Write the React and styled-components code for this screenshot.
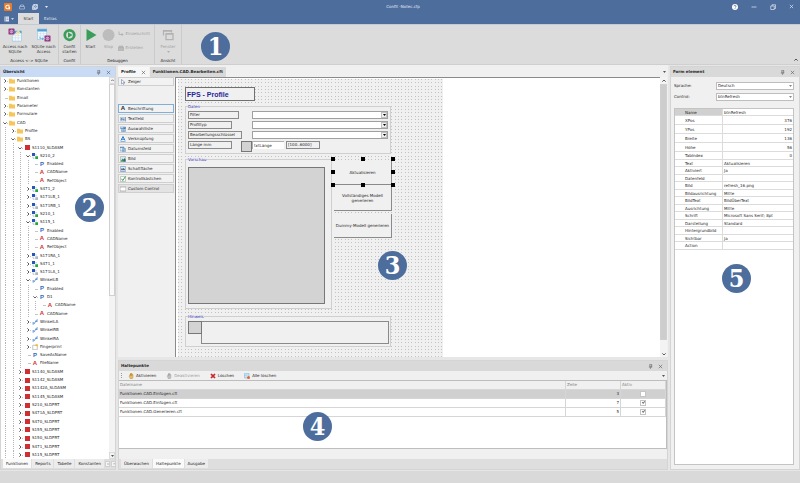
import React from 'react';
import styled, { createGlobalStyle, css } from 'styled-components';

const blue = '#4d6d9c';
const shade = '#dcdcdc';
const face = '#f0f0f0';

const GlobalStyle = createGlobalStyle`
  *, *::before, *::after { box-sizing: border-box; }
  body { margin: 0; background: ${shade}; }
  body, button, input, select, table {
    font-family: 'DejaVu Sans', Tahoma, sans-serif;
    font-size: 4px;
    line-height: 6px;
    color: #262626;
  }
  button { border: 0; padding: 0; background: none; white-space: nowrap; }
  svg { display: block; flex: none; }
`;

/* ---------- shell ---------- */
const Shell = styled.div`
  position: relative;
  height: 100vh;
  display: grid;
  grid-template-rows: 24px 41px minmax(0, 1fr) 12px;
`;
const Banner = styled.header`
  background: ${blue};
  color: #e8eef8;
  display: flex;
  flex-direction: column;
  justify-content: space-between;
`;
const TitleBar = styled.div`
  display: grid;
  grid-template-columns: 1fr auto 1fr;
  align-items: center;
  height: 13px;
  padding: 0 6px 0 12px;
`;
const Title = styled.h1`
  margin: 0;
  font-size: 4px;
  font-weight: normal;
`;
const QuickBar = styled.div`
  display: flex;
  align-items: center;
  gap: 13px;
`;
const QuickIcons = styled(QuickBar)`
  gap: 7px;
  margin-left: -8px;
`;
const WindowButtons = styled(QuickBar)`
  justify-content: flex-end;
`;
const MenuTabs = styled.nav`
  display: flex;
  height: 11px;
  align-items: stretch;
`;
const MenuTab = styled.button`
  min-width: 21px;
  padding: 0 5px;
  color: ${p => (p.$active ? '#303030' : '#e8eef8')};
  background: ${p => (p.$active ? shade : 'transparent')};
`;
const FileMenu = styled.button`
  width: 18px;
  display: flex;
  align-items: center;
  justify-content: center;
  gap: 1px;
`;

/* ---------- ribbon ---------- */
const Ribbon = styled.div`
  display: flex;
  background: ${shade};
  position: relative;
  border-top: 1px solid #c4cad4;
  border-bottom: 1px solid #cfcfcf;
`;
const RibbonGroup = styled.section`
  width: ${p => p.$width}px;
  border-right: 1px solid #cbcbcb;
  display: flex;
  flex-direction: column;
  align-items: center;
  justify-content: space-between;
`;
const RibbonTools = styled.div`
  display: flex;
  padding-top: 3px;
`;
const BigButton = styled.button`
  width: ${p => p.$width}px;
  height: 28px;
  display: flex;
  flex-direction: column;
  align-items: center;
  justify-content: flex-start;
  gap: 2px;
  line-height: 5px;
  white-space: pre-line;
  color: ${p => (p.disabled ? '#a0a0a0' : '#303030')};
`;
const SmallButtons = styled.div`
  display: flex;
  flex-direction: column;
  gap: 8px;
  padding-top: 3px;
  width: 36px;
`;
const SmallButton = styled.button`
  display: flex;
  align-items: center;
  gap: 2px;
  color: #a0a0a0;
`;
const GroupName = styled.span`
  padding-bottom: 0;
`;
const Collapse = styled.button`
  margin-left: auto;
  align-self: flex-end;
  padding: 2px;
`;

/* ---------- docking ---------- */
const Workspace = styled.main`
  display: grid;
  grid-template-columns: 116px minmax(0, 1fr) 130px;
  gap: 2px;
  background: #e6e6e6;
`;
const Dock = styled.section`
  position: relative;
  display: flex;
  flex-direction: column;
  min-height: 0;
  min-width: 0;
  background: ${face};
  border: 1px solid #d4d4d4;
  margin: 1px 0;
`;
const DockHeader = styled.header`
  display: flex;
  align-items: center;
  gap: 5px;
  height: 10px;
  flex: none;
  padding: 0 4px 0 2px;
  background: ${p => (p.$active ? '#c9daf5' : '#d9d9d9')};
`;
const DockTitle = styled.h2`
  margin: 0;
  flex: 1;
  font-size: 4px;
  font-weight: bold;
`;
const Center = styled.div`
  display: grid;
  grid-template-rows: minmax(0, 1fr) 112px;
  gap: 2px;
  min-width: 0;
`;

/* ---------- tree ---------- */
const TreeFrame = styled.div`
  flex: 1;
  min-height: 0;
  display: flex;
  background: #fff;
`;
const TreeList = styled.ul`
  list-style: none;
  margin: 0;
  padding: 0;
  flex: 1;
  min-width: 0;
  overflow: hidden;
  display: grid;
  grid-template-rows: repeat(46, minmax(8px, 1fr));
`;
const TreeRow = styled.li`
  display: flex;
  align-items: center;
  white-space: nowrap;
`;
const Guide = styled.span`
  align-self: stretch;
  width: 8px;
  flex: none;
  background: repeating-linear-gradient(#b4b4b4 0 1px, transparent 1px 2px) 4px 0 / 1px 100% no-repeat;
  &:nth-child(even) { width: 7px; }
`;
const Twist = styled.span`
  width: 8px;
  height: 6px;
  flex: none;
  display: flex;
  align-items: center;
  padding-left: 2px;
  background: linear-gradient(#c4c4c4, #c4c4c4) ${p => (p.$leaf ? 4 : 6)}px 3px / ${p => (p.$leaf ? 3 : 1)}px 1px no-repeat;
`;
const TreeIcon = styled.span`
  width: 6px;
  margin-right: 2px;
  flex: none;
  display: flex;
  justify-content: center;
`;
const ScrollBar = styled.div`
  width: ${p => p.$width}px;
  flex: none;
  display: flex;
  flex-direction: column;
  background: #f3f3f3;
`;
const ScrollButton = styled.button`
  height: 7px;
  display: flex;
  align-items: center;
  justify-content: center;
  border: 1px solid ${p => (p.$flat ? 'transparent' : '#dadada')};
`;
const Thumb = styled.div`
  flex: ${p => p.$share};
  background: ${p => p.$color};
  border: 1px solid #d0d0d0;
`;
const ThumbRest = styled.div`
  flex: ${p => p.$share};
`;
const FootTabs = styled.nav`
  display: flex;
  align-items: stretch;
  gap: 1px;
  height: ${p => p.$height}px;
  flex: none;
  padding: 0 2px 1px;
  background: #dedede;
`;
const FootTab = styled.button`
  padding: 0 3px;
  background: ${p => (p.$active ? '#fafafa' : '#ececec')};
`;
const FootArrows = styled.div`
  display: flex;
  align-items: center;
  gap: 1px;
  margin-left: auto;
`;
const ArrowBox = styled.button`
  width: 5px;
  height: 6px;
  display: flex;
  align-items: center;
  justify-content: center;
  background: #f5f5f5;
  border: 1px solid #d0d0d0;
`;

/* ---------- editor ---------- */
const Editor = styled.section`
  position: relative;
  display: flex;
  flex-direction: column;
  min-height: 0;
  min-width: 0;
  background: ${face};
`;
const FileTabs = styled.nav`
  display: flex;
  gap: 1px;
  height: 12px;
  flex: none;
  padding: 2px 2px 0 0;
  align-items: stretch;
`;
const FileTab = styled.button`
  display: flex;
  align-items: center;
  gap: 5px;
  padding: 0 3px;
  font-weight: bold;
  background: ${p => (p.$active ? '#f7f7f7' : '#d9d9d9')};
`;
const TabMenu = styled.button`
  margin-left: auto;
`;
const EditorBody = styled.div`
  flex: 1;
  min-height: 0;
  display: flex;
  padding-right: 1px;
`;
const Toolbox = styled.div`
  width: 57px;
  flex: none;
  display: flex;
  flex-direction: column;
  gap: 1px;
  padding-right: 1px;
`;
const Tool = styled.button`
  height: 9px;
  flex: none;
  display: flex;
  align-items: center;
  gap: 2px;
  padding-left: 1px;
  background: ${p => (p.$last ? '#e3e3e3' : '#f2f2f2')};
  border: 1px solid ${p => (p.$selected ? '#7fb0dc' : '#cfcfcf')};
  margin-bottom: ${p => (p.$spaced ? 17 : 0)}px;
`;
const Canvas = styled.div`
  flex: 1;
  min-width: 0;
  background: #fff;
  border: solid #8a8a8a;
  border-width: 1px 0 0 1px;
  padding: 1px 0 0 2px;
  overflow: hidden;
`;
const FormSurface = styled.div`
  position: relative;
  width: 265px;
  height: 100%;
  background:
    linear-gradient(90deg, transparent 0 1px, ${face} 1px 3px, transparent 3px 4px, ${face} 4px 7px, transparent 7px 8px, ${face} 8px 10px) 0 0 / 10px 10px,
    linear-gradient(#c2c2c2 0 1px, ${face} 1px 3px, #c2c2c2 3px 4px, ${face} 4px 7px, #c2c2c2 7px 8px, ${face} 8px 10px) 0 0 / 10px 10px;
`;
const placed = css`
  position: absolute;
  left: ${p => p.$x}px;
  top: ${p => p.$y}px;
  width: ${p => p.$w}px;
  height: ${p => p.$h}px;
`;
const FormTitle = styled.div`
  ${placed}
  border: 1px solid #707070;
  padding-left: 1px;
  background: ${face};
  color: #26269a;
  font: bold 7px/13px 'Liberation Sans', Arial, sans-serif;
`;
const Group = styled.div`
  ${placed}
  background: ${face};
  &::before {
    content: '';
    position: absolute;
    inset: 2px 0 0 0;
    border: 1px solid #cfcfcf;
  }
`;
const GroupTitle = styled.span`
  position: absolute;
  left: 3px;
  top: 0;
  background: ${face};
  color: #3030b0;
`;
const FieldLabel = styled.label`
  ${placed}
  border: 1px solid #8a8a8a;
  padding-left: 1px;
  white-space: nowrap;
  line-height: 6px;
`;
const FormCombo = styled.select`
  ${placed}
  appearance: none;
  border: 1px solid #a0a0a0;
  border-radius: 0;
  background: #fff;
`;
const ComboArrow = styled.span`
  ${placed}
  display: flex;
  align-items: center;
  justify-content: center;
  background: ${face};
  border: 1px solid #c0c0c0;
  pointer-events: none;
`;
const FormInput = styled.input`
  ${placed}
  border: 1px solid #b0b0b0;
  border-width: 1px 0 0 1px;
  padding: 0 0 0 1px;
  background: #fff;
`;
const NoteBox = styled.textarea`
  ${placed}
  resize: none;
  border: 1px solid #8a8a8a;
  background: ${face};
`;
const Picture = styled.div`
  ${placed}
  background: #d3d3d3;
  border: 1px solid #777;
`;
const FormButton = styled.button`
  ${placed}
  background: ${face};
  border: solid #8a8a8a;
  border-width: 0 1px 1px 0;
  white-space: pre-line;
  line-height: 5px;
`;
const Handle = styled.i`
  ${placed}
  background: #000;
`;

/* ---------- breakpoints ---------- */
const ToolStrip = styled.div`
  display: flex;
  align-items: center;
  gap: 10px;
  height: 9px;
  flex: none;
  padding: 0 2px;
`;
const StripButton = styled.button`
  display: flex;
  align-items: center;
  gap: 2px;
  color: ${p => (p.disabled ? '#999' : '#262626')};
`;
const Grip = styled.span`
  width: 1px;
  height: 5px;
  margin-right: -4px;
  background: repeating-linear-gradient(#999 0 1px, transparent 1px 2px);
`;
const Spacer = styled.span`
  flex: 1;
`;
const ListFrame = styled.div`
  flex: 1;
  min-height: 0;
  background: #fff;
  border: 1px solid #bdbdbd;
  border-left: 0;
  margin-bottom: 10px;
`;
const ListTable = styled.table`
  width: 100%;
  table-layout: fixed;
  border-collapse: separate;
  border-spacing: 0;
  th, td {
    padding: 0 1px;
    height: 9px;
    text-align: left;
    border-right: 1px solid #d6d6d6;
    border-bottom: 1px solid #d6d6d6;
  }
  th {
    background: ${face};
    color: #808080;
    font-weight: normal;
  }
  th:nth-child(2) { width: 55px; }
  th:nth-child(3) { width: 45px; }
  td:nth-child(2) { text-align: right; }
  td:nth-child(3) { text-align: center; }
`;
const ListRow = styled.tr`
  background: ${p => (p.$selected ? '#d0d0d0' : '#fff')};
`;
const Check = styled.input`
  appearance: none;
  display: block;
  width: 6px;
  height: 6px;
  margin: 0 auto;
  border: 1px solid #c4c4c4;
  background: #fff;
  &:checked::after {
    content: '';
    display: block;
    width: 3px;
    height: 2px;
    margin: 0 auto;
    border: solid #777;
    border-width: 0 0 1px 1px;
    transform: rotate(-45deg);
  }
`;

/* ---------- properties ---------- */
const PropBody = styled.div`
  flex: 1;
  min-height: 0;
  display: flex;
  flex-direction: column;
  gap: 3px;
  padding: 5px 5px 4px 3px;
`;
const Field = styled.div`
  display: grid;
  grid-template-columns: 42px minmax(0, 1fr);
  align-items: center;
  position: relative;
`;
const FieldSelect = styled.select`
  appearance: none;
  height: 8px;
  width: 100%;
  padding: 0 1px;
  border: 1px solid #bdbdbd;
  border-radius: 0;
  background: #fff;
`;
const FieldArrow = styled.span`
  position: absolute;
  right: 2px;
  top: 3px;
  pointer-events: none;
`;
const PropFrame = styled.div`
  flex: 1;
  margin-top: 4px;
  background: #fff;
  border: 1px solid #c4c4c4;
`;
const PropTable = styled.table`
  width: 100%;
  table-layout: fixed;
  border-collapse: separate;
  border-spacing: 0;
  th, td {
    padding: 0 1px;
    font-weight: normal;
    text-align: left;
    line-height: 5px;
    white-space: nowrap;
    border-bottom: 1px solid #dcdcdc;
  }
  th {
    width: 48px;
    padding-left: 10px;
    border-right: 1px solid #dcdcdc;
  }
`;
const PropRow = styled.tr`
  height: ${p => (p.$numeric ? 9 : 8)}px;
  &:nth-child(odd) { height: ${p => (p.$numeric ? 9 : 7)}px; }
  th { background: ${p => (p.$selected ? '#d0d0d0' : 'transparent')}; }
  td { text-align: ${p => (p.$right ? 'right' : 'left')}; }
`;
const Status = styled.footer`
  background: #d9d9d9;
`;
const Badge = styled.span`
  position: absolute;
  left: ${p => p.$x}px;
  top: ${p => p.$y}px;
  width: 29px;
  height: 29px;
  border-radius: 50%;
  background: ${blue};
  color: #fff;
  text-align: center;
  font: bold 25px/29px 'DejaVu Serif Condensed', 'DejaVu Serif', serif;
`;

/* ---------- drawings ---------- */
const Svg = ({ w = 6, h = 6, box = '0 0 12 12', children }) => (
  <svg width={w} height={h} viewBox={box} fill="none" aria-hidden="true">{children}</svg>
);
const Close = ({ color = '#666' }) => <Svg w={5} h={5}><path d="M2 2l8 8M10 2l-8 8" stroke={color} strokeWidth="1.6" /></Svg>;
const Pin = () => <Svg w={5} h={5}><path d="M4 1h5v6H4zM7.500 1v6M2 7.500h8M6 8v4" stroke="#666" strokeWidth="1.3" /></Svg>;
const Caret = ({ color = '#555' }) => <Svg w={3} h={2} box="0 0 6 4"><path d="M0 0h6L3 4z" fill={color} /></Svg>;
const Chev = ({ d, size = 4 }) => (
  <Svg w={size} h={size}><path d={{ right: 'M4 1l5 5-5 5', down: 'M1 4l5 5 5-5', up: 'M1 8l5-5 5 5', left: 'M8 1L3 6l5 5' }[d]} stroke="#333" strokeWidth="2.4" /></Svg>
);
const Database = ({ x, y }) => (
  <g transform={`translate(${x} ${y})`}>
    <rect width="13" height="13" rx="1" fill="#943a84" />
    <circle cx="6.500" cy="6.500" r="3" stroke="#fff" strokeWidth="1.200" /><path d="M6.500 4v5" stroke="#fff" />
  </g>
);
const Sheet = ({ x, y }) => (
  <g transform={`translate(${x} ${y})`}>
    <rect width="20" height="22" fill="#f4fafe" stroke="#79b6dd" />
    <path d="M0 3h20" stroke="#4d9fd4" strokeWidth="5" />
    <path d="M0 10h20M0 15h20M7 5v17M13 5v17" stroke="#b9daee" />
  </g>
);
const ToSqlite = () => <Svg w={14} h={14} box="0 0 30 30"><Sheet x={9} y={6} /><Database x={1} y={1} /><path d="M17 17q6-1 6-6l4 1-5-7-5 5 4 1q0 3-5 4z" fill="#f4d35c" stroke="#fff" /></Svg>;
const ToAccess = () => <Svg w={14} h={14} box="0 0 30 30"><Sheet x={1} y={2} /><Database x={16} y={16} /><path d="M4 18q1 7 7 7v3l5-5-5-4v3q-3 0-4-4z" fill="#5aa6dc" stroke="#fff" /></Svg>;
const RunRound = () => <Svg w={13} h={14} box="0 0 26 28"><circle cx="13" cy="14" r="9.500" stroke="#3a9d59" strokeWidth="5.500" /><path d="M10 8.500l9 5.500-9 5.500z" fill="#3a9d59" /></Svg>;
const Play = () => <Svg w={12} h={14} box="0 0 24 28"><path d="M3 2l20 12L3 26z" fill="#3a9d59" /></Svg>;
const StopRound = () => <Svg w={13} h={14} box="0 0 26 28"><circle cx="13" cy="14" r="12" fill="#bcbcbc" /></Svg>;
const Windows = () => <Svg w={12} h={14} box="0 0 24 28"><path d="M3 15V5h16v4M3 6h16M8 11h14v12H8zM8 12h14" stroke="#b2b2b2" strokeWidth="2.500" /></Svg>;
const Folder = () => <Svg><path d="M0 1.500h5l1 1.500h6v8H0z" fill="#f7c65b" /></Svg>;
const Part = () => <Svg w={5} h={5}><rect width="12" height="12" fill="#cf2e32" /></Svg>;
const Assembly = ({ gray }) => (
  <Svg><rect width="6" height="6" fill="#2855b8" /><rect x="6.500" y="6.500" width="5.500" height="5.500" fill={gray ? '#aeb6c4' : '#21a83a'} /><path d="M2 7v3.500h3M8 2v3" stroke="#6e8bc4" /></Svg>
);
const Link = () => <Svg><path d="M1 10h3l5-8h3M1 7.500h3M8 5h3" stroke="#3e7cc9" strokeWidth="1.600" /></Svg>;
const Page = () => <Svg><path d="M1.500 2.500h9v9h-9z" fill="#fff" stroke="#888" /><path d="M7 0l5 1v4L7 4z" fill="#f2be3c" /></Svg>;
const Letter = styled.b`
  width: 6px;
  text-align: center;
  font: bold 6px/7px 'Liberation Sans', Arial, sans-serif;
  color: ${p => p.$color};
`;
const nodeIcons = {
  folder: <Folder />, part: <Part />, asm: <Assembly />, asmGray: <Assembly gray />, link: <Link />, page: <Page />,
  P: <Letter $color="#2f6cc0">P</Letter>, A: <Letter $color="#cf3030">A</Letter>,
};
const Hand = ({ off }) => <Svg w={6} h={6}><path d="M2 6l1-1 1 1V2l1.200-.5V5 1l1.300-.5V5l.5-4 1.200.5V5l1-2.500L10 3v6l-2 3H5z" fill={off ? '#c0c0c0' : '#e8bd62'} stroke={off ? '#a0a0a0' : '#a97924'} strokeWidth=".7" /></Svg>;
const RedX = () => <Svg><path d="M2 2l8 8M10 2l-8 8" stroke="#c7252b" strokeWidth="3.500" /></Svg>;
const ClearAll = () => <Svg><path d="M1 1h9v9H1z" fill="#e7f3fc" stroke="#6ba9dc" /><path d="M1 4h9M4 4v6" stroke="#6ba9dc" /><circle cx="9" cy="9" r="3" fill="#e0692f" /></Svg>;

const toolIcons = {
  Zeiger: <Svg><path d="M3 1v9l2.500-2L7 11l1.500-1L7 7h3z" fill="#fff" stroke="#51698d" /></Svg>,
  Beschriftung: <Letter $color="#222">A</Letter>,
  Textfeld: <Svg><path d="M0 3h9v7H0z" fill="#dcebf8" stroke="#7fa9d2" /><path d="M2 8V5h2v3H2M6 4v4h1.500V6M11 2v9" stroke="#33557e" /></Svg>,
  Auswahlliste: <Svg><path d="M0 2h11v3H0zM3 5h8v6H3z" fill="#dcebf8" stroke="#4f83bd" /><path d="M7 3l4 0-2 3zM4.500 7.500h5M4.500 9.500h5" stroke="#315e96" /></Svg>,
  'Verknüpfung': <Svg><path d="M2 9L6 1l4 8M3.500 6.500h5" stroke="#2f7fcb" strokeWidth="2" /><path d="M1 11h10" stroke="#2f7fcb" /></Svg>,
  Datumsfeld: <Svg><path d="M0 2h8v8H0zM5 5h6v6H5z" fill="#dcebf8" stroke="#4f83bd" /><path d="M0 3h8M6 8h4" stroke="#315e96" /></Svg>,
  Bild: <Svg><path d="M1 1h10v10H1z" fill="#d8e8f2" stroke="#999" /><path d="M1 11l4-6 2 3 2-5 2 8z" fill="#3f9a48" /><path d="M7 6h4v5H7z" fill="#30609c" /></Svg>,
  'Schaltfläche': <Svg><rect x=".5" y="1" width="11" height="10" rx="1" fill="#dcebf8" stroke="#3d74b0" /><path d="M3 8V5.500h2V8H3M7 4v4h2V6H7" stroke="#222" /></Svg>,
  'Kontrollkästchen': <Svg><path d="M1 1h10v10H1z" fill="#fff" stroke="#999" /><path d="M3 5.500L5.500 9 11 1" stroke="#2da443" strokeWidth="2" /></Svg>,
  'Custom Control': <Svg><path d="M0 2h12v8H0z" fill="#fff" stroke="#777" /></Svg>,
};

/* ---------- data: [depth, twist, icon, text] ---------- */
const tree = [
  [0, 'right', 'folder', 'Funktionen'], [0, 'right', 'folder', 'Konstanten'], [0, '', 'folder', 'Email'],
  [0, 'right', 'folder', 'Parameter'], [0, 'right', 'folder', 'Formulare'], [0, 'down', 'folder', 'CAD'],
  [1, 'right', 'folder', 'Profile'], [1, 'down', 'folder', 'BS'], [2, 'down', 'part', 'S1110_SLDASM'],
  [3, 'down', 'asm', 'S210_2'], [4, '', 'P', 'Enabled'], [4, '', 'A', 'CADName'], [4, '', 'A', 'RefObject'],
  [3, 'right', 'asm', 'S471_2'], [3, 'right', 'asmGray', 'S171LB_1'], [3, 'right', 'asmGray', 'S171RB_1'],
  [3, 'right', 'asm', 'S210_1'], [3, 'down', 'asm', 'S115_1'], [4, '', 'P', 'Enabled'], [4, '', 'A', 'CADName'],
  [4, '', 'A', 'RefObject'], [3, 'right', 'asmGray', 'S171RA_1'], [3, 'right', 'asm', 'S471_1'],
  [3, 'right', 'asmGray', 'S171LA_1'], [3, 'down', 'link', 'WinkelLB'], [4, '', 'P', 'Enabled'],
  [4, 'down', 'P', 'D1'], [5, '', 'A', 'CADName'], [4, '', 'A', 'CADName'], [3, 'right', 'link', 'WinkelLA'],
  [3, 'right', 'link', 'WinkelRB'], [3, 'right', 'link', 'WinkelRA'], [3, 'right', 'page', 'Fingerprint'],
  [3, '', 'P', 'SaveAsName'], [3, '', 'A', 'FileName'],
  ...['S1140_SLDASM', 'S1142_SLDASM', 'S1142A_SLDASM', 'S1145_SLDASM', 'S210_SLDPRT', 'S471A_SLDPRT',
    'S470_SLDPRT', 'S155_SLDPRT', 'S150_SLDPRT', 'S471_SLDPRT', 'S115_SLDPRT'].map(n => [2, 'right', 'part', n]),
];
const tools = Object.keys(toolIcons);
const breakpoints = [
  ['Funktionen.CAD.Einfügen.cft', 3, false],
  ['Funktionen.CAD.Einfügen.cft', 7, true],
  ['Funktionen.CAD.Generieren.cft', 5, true],
];
const properties = [
  ['Name', 'btnRefresh'], ['XPos', '376'], ['YPos', '192'], ['Breite', '136'], ['Höhe', '56'], ['TabIndex', '0'],
  ['Text', 'Aktualisieren'], ['Aktiviert', 'Ja'], ['Datenfeld', ''], ['Bild', 'refresh_16.png'],
  ['Bildausrichtung', 'Mitte'], ['BildText', 'BildÜberText'], ['Ausrichtung', 'Mitte'],
  ['Schrift', 'Microsoft Sans Serif; 8pt'], ['Darstellung', 'Standard'], ['Hintergrundbild', ''],
  ['Sichtbar', 'Ja'], ['Action', ''],
];
const combos = [['filter', 'Filter', 51, 32], ['profiltyp', 'Profiltyp', 44, 42], ['schluessel', 'Bearbeitungsschlüssel', 54, 52]];
const handles = [[153, 78], [183, 78], [213, 78], [153, 91], [213, 91], [153, 104], [183, 104], [213, 104]];

function DockHead({ title, active }) {
  return (
    <DockHeader $active={active}>
      <DockTitle>{title}</DockTitle>
      <button aria-label="Anheften"><Pin /></button>
      <button aria-label="Schließen"><Close /></button>
    </DockHeader>
  );
}

function Header() {
  return (
    <Banner>
      <TitleBar>
        <QuickIcons>
          <Svg w={8} h={8} box="0 0 16 16"><rect width="16" height="16" rx="2" fill="#ea7b27" /><path d="M11 4.500H7a3.500 3.500 0 000 7h4V8H8" stroke="#fff" strokeWidth="2.200" /></Svg>
          <button aria-label="Öffnen"><Svg><path d="M1 5h10v5H1zM3 5V2h6v3" stroke="#aebfda" strokeWidth="1.500" /></Svg></button>
          <button aria-label="Speichern"><Svg><path d="M1 3v8h8M3 1h8v8H3zM5 1v3h4V1M5 9V6h4v3" stroke="#dfe8f6" strokeWidth="1.500" /></Svg></button>
          <button aria-label="Anpassen"><Caret color="#e8eef8" /></button>
        </QuickIcons>
        <Title>Confit -Notec.cfp</Title>
        <WindowButtons>
          <button aria-label="Hilfe"><Svg><circle cx="6" cy="6" r="6" fill="#fff" /><path d="M4 4.500q0-2 2-2t2 2-2 2.500M6 8.500v1.500" stroke={blue} strokeWidth="1.500" /></Svg></button>
          <button aria-label="Minimieren"><Svg><path d="M1 6h10" stroke="#e8eef8" strokeWidth="1.400" /></Svg></button>
          <button aria-label="Wiederherstellen"><Svg><path d="M1.500 4h7v7h-7zM4 4V1.500h7V9H8.500" stroke="#e8eef8" strokeWidth="1.300" /></Svg></button>
          <button aria-label="Schließen"><Close color="#e8eef8" /></button>
        </WindowButtons>
      </TitleBar>
      <MenuTabs>
        <FileMenu aria-label="Datei"><Svg><path d="M1 1h9v10H1z" fill="#dfe8f6" /><path d="M3 1v10M5 4h4M5 7h4" stroke="#5e7193" /></Svg><Caret color="#c8d3e5" /></FileMenu>
        <MenuTab $active>Start</MenuTab>
        <MenuTab>Extras</MenuTab>
      </MenuTabs>
    </Banner>
  );
}

function RibbonBar() {
  return (
    <Ribbon>
      <RibbonGroup $width={59}>
        <RibbonTools>
          <BigButton $width={29}><ToSqlite />{'Access nach\nSQLite'}</BigButton>
          <BigButton $width={28}><ToAccess />{'SQLite nach\nAccess'}</BigButton>
        </RibbonTools>
        <GroupName>Access &lt;-&gt; SQLite</GroupName>
      </RibbonGroup>
      <RibbonGroup $width={22}>
        <RibbonTools><BigButton $width={20}><RunRound />{'Confit\nstarten'}</BigButton></RibbonTools>
        <GroupName>Confit</GroupName>
      </RibbonGroup>
      <RibbonGroup $width={74}>
        <RibbonTools>
          <BigButton $width={18}><Play />Start</BigButton>
          <BigButton $width={18} disabled><StopRound />Stop</BigButton>
          <SmallButtons>
            <SmallButton disabled><Svg><path d="M2 1v6h8M7 4l3 3-3 3" stroke="#aaa" strokeWidth="1.500" /></Svg>Einzelschritt</SmallButton>
            <SmallButton disabled><Svg><path d="M0 5h12v6H0zM2 5V2h8v3" fill="#bbb" stroke="#a8a8a8" /></Svg>Erstellen</SmallButton>
          </SmallButtons>
        </RibbonTools>
        <GroupName>Debuggen</GroupName>
      </RibbonGroup>
      <RibbonGroup $width={27}>
        <RibbonTools><BigButton $width={24} disabled><Windows />Fenster<Caret color="#b0b0b0" /></BigButton></RibbonTools>
        <GroupName>Ansicht</GroupName>
      </RibbonGroup>
      <Collapse aria-label="Menüband einklappen"><Chev d="up" /></Collapse>
      <Badge $x={201} $y={7}>1</Badge>
    </Ribbon>
  );
}

function Overview() {
  return (
    <Dock>
      <DockHead title="Übersicht" active />
      <TreeFrame>
        <TreeList>
          {tree.map(([depth, twist, icon, text], i) => (
            <TreeRow key={i}>
              {Array.from({ length: depth }, (_, k) => <Guide key={k} />)}
              <Twist $leaf={!twist}>{twist && <Chev d={twist} />}</Twist>
              <TreeIcon>{nodeIcons[icon]}</TreeIcon>
              {text}
            </TreeRow>
          ))}
        </TreeList>
        <ScrollBar $width={6}>
          <ScrollButton aria-label="Nach oben"><Chev d="up" size={3} /></ScrollButton>
          <Thumb $share={212} $color="#fafafa" />
          <ThumbRest $share={157} />
          <ScrollButton aria-label="Nach unten"><Caret /></ScrollButton>
        </ScrollBar>
      </TreeFrame>
      <FootTabs $height={10}>
        <FootTab $active>Funktionen</FootTab><FootTab>Reports</FootTab><FootTab>Tabelle</FootTab><FootTab>Konstanten</FootTab>
        <FootArrows>
          <ArrowBox aria-label="Zurück"><Chev d="left" size={2} /></ArrowBox>
          <ArrowBox aria-label="Weiter"><Chev d="right" size={2} /></ArrowBox>
        </FootArrows>
      </FootTabs>
      <Badge $x={74} $y={126}>2</Badge>
    </Dock>
  );
}

function FormDesigner() {
  return (
    <FormSurface>
      <FormTitle $x={7} $y={8} $w={70} $h={14}>FPS - Profile</FormTitle>
      <Group $x={7} $y={25} $w={206} $h={50}><GroupTitle>Daten</GroupTitle></Group>
      {combos.map(([id, text, w, y]) => (
        <React.Fragment key={id}>
          <FieldLabel htmlFor={id} $x={10} $y={y} $w={w} $h={8}>{text}</FieldLabel>
          <FormCombo id={id} $x={74} $y={y} $w={136} $h={8} />
          <ComboArrow $x={203} $y={y + 1} $w={6} $h={6}><Caret color="#000" /></ComboArrow>
        </React.Fragment>
      ))}
      <FieldLabel htmlFor="laenge" $x={10} $y={62} $w={44} $h={8}>Länge mm</FieldLabel>
      <FormInput id="laenge" defaultValue="txtLänge" $x={74} $y={62} $w={32} $h={8} />
      <Picture $x={63} $y={62} $w={11} $h={11} />
      <FieldLabel as="span" $x={108} $y={62} $w={34} $h={8}>[100..6000]</FieldLabel>
      <Group $x={7} $y={78} $w={147} $h={152}><GroupTitle>Vorschau</GroupTitle></Group>
      <Picture $x={10} $y={88} $w={137} $h={137} />
      <FormButton $x={156} $y={81} $w={58} $h={25}>Aktualisieren</FormButton>
      <FormButton $x={156} $y={107} $w={58} $h={25}>{'Vollständiges Modell\ngenerieren'}</FormButton>
      <FormButton $x={156} $y={135} $w={58} $h={24}>Dummy-Modell generieren</FormButton>
      {handles.map(([x, y]) => <Handle key={`${x}-${y}`} $x={x} $y={y} $w={4} $h={4} />)}
      <Group $x={7} $y={235} $w={206} $h={33}><GroupTitle as="label" htmlFor="hinweis">Hinweis</GroupTitle></Group>
      <NoteBox id="hinweis" $x={23} $y={242} $w={188} $h={23} />
      <Picture $x={10} $y={242} $w={14} $h={13} />
      <Badge $x={200} $y={172}>3</Badge>
    </FormSurface>
  );
}

function EditorPane() {
  return (
    <Editor>
      <FileTabs>
        <FileTab $active>Profile <Close /></FileTab>
        <FileTab>Funktionen.CAD.Bearbeiten.cft</FileTab>
        <TabMenu aria-label="Dateien"><Caret /></TabMenu>
      </FileTabs>
      <EditorBody>
        <Toolbox>
          {tools.map((name, i) => (
            <Tool key={name} $spaced={i === 0} $selected={i === 1} $last={i === tools.length - 1}>{toolIcons[name]}{name}</Tool>
          ))}
        </Toolbox>
        <Canvas><FormDesigner /></Canvas>
        <ScrollBar $width={7}>
          <ScrollButton $flat aria-label="Nach oben"><Chev d="up" /></ScrollButton>
          <Thumb $share={256} $color="#cdcdcd" />
          <ThumbRest $share={10} />
          <ScrollButton $flat aria-label="Nach unten"><Chev d="down" /></ScrollButton>
        </ScrollBar>
      </EditorBody>
    </Editor>
  );
}

function Breakpoints() {
  return (
    <Dock>
      <DockHead title="Haltepunkte" />
      <ToolStrip>
        <Grip />
        <StripButton><Hand />Aktivieren</StripButton>
        <StripButton disabled><Hand off />Deaktivieren</StripButton>
        <StripButton><RedX />Löschen</StripButton>
        <StripButton><ClearAll />Alle löschen</StripButton>
        <Spacer />
        <button aria-label="Optionen"><Caret /></button>
      </ToolStrip>
      <ListFrame>
        <ListTable>
          <thead><tr><th>Dateiname</th><th>Zeile</th><th>Aktiv</th></tr></thead>
          <tbody>
            {breakpoints.map(([file, row, on], i) => (
              <ListRow key={i} $selected={i === 0}>
                <td>{file}</td><td>{row}</td>
                <td><Check type="checkbox" defaultChecked={on} aria-label={`Aktiv ${file} ${row}`} /></td>
              </ListRow>
            ))}
          </tbody>
        </ListTable>
      </ListFrame>
      <FootTabs $height={10}>
        <FootTab>Überwachen</FootTab><FootTab $active>Haltepunkte</FootTab><FootTab>Ausgabe</FootTab>
      </FootTabs>
      <Badge $x={184} $y={51}>4</Badge>
    </Dock>
  );
}

function Properties() {
  return (
    <Dock>
      <DockHead title="Form element" />
      <PropBody>
        {[['sprache', 'Sprache:', 'Deutsch'], ['control', 'Control:', 'btnRefresh']].map(([id, label, value]) => (
          <Field key={id}>
            <label htmlFor={id}>{label}</label>
            <FieldSelect id={id}><option>{value}</option></FieldSelect>
            <FieldArrow><Caret color="#888" /></FieldArrow>
          </Field>
        ))}
        <PropFrame>
          <PropTable>
            <tbody>
              {properties.map(([name, value], i) => (
                <PropRow key={name} $selected={i === 0} $numeric={i > 0 && i < 5} $right={i > 0 && i < 6}>
                  <th scope="row">{name}</th><td>{value}</td>
                </PropRow>
              ))}
            </tbody>
          </PropTable>
        </PropFrame>
      </PropBody>
      <Badge $x={51} $y={197}>5</Badge>
    </Dock>
  );
}

export default function App() {
  return (
    <>
      <GlobalStyle />
      <Shell>
        <Header />
        <RibbonBar />
        <Workspace>
          <Overview />
          <Center><EditorPane /><Breakpoints /></Center>
          <Properties />
        </Workspace>
        <Status />
      </Shell>
    </>
  );
}
